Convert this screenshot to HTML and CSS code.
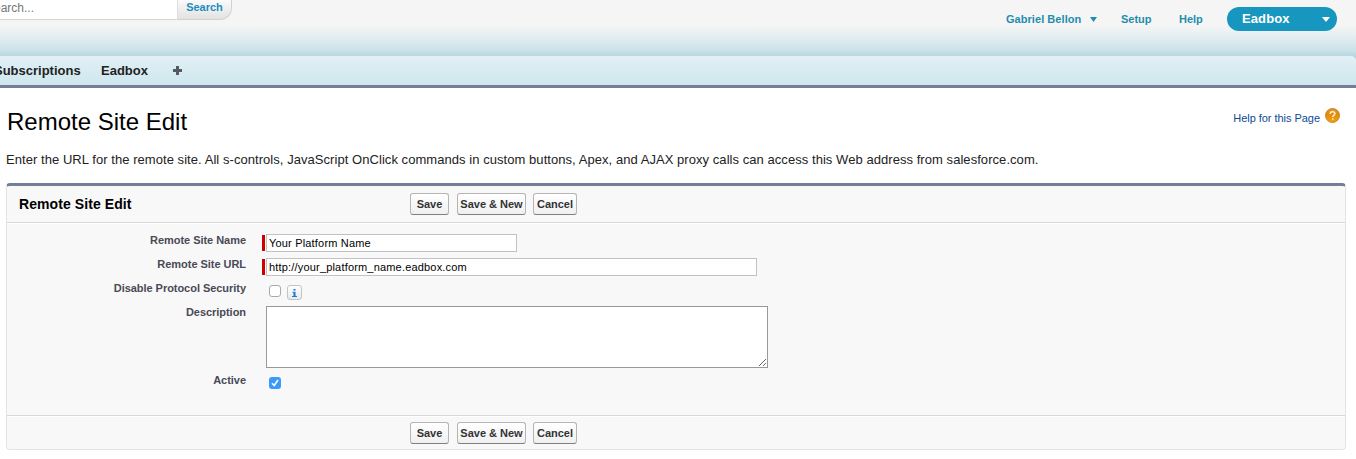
FILE: index.html
```html
<!DOCTYPE html>
<html lang="en">
<head>
<meta charset="utf-8">
<title>Remote Site Edit</title>
<link rel="stylesheet" href="styles.css">
</head>
<body>
<header class="top">
  <div class="search">
    <div class="search-field"><span class="search-hint">Search...</span></div>
    <button class="search-button">Search</button>
  </div>
  <nav class="account">
    <a class="user">Gabriel Bellon<svg class="caret" width="7" height="5" viewBox="0 0 7 5"><path d="M0 0h7L3.5 5z" fill="currentColor"/></svg></a>
    <a class="setup">Setup</a>
    <a class="help">Help</a>
    <div class="app-menu">Eadbox<svg width="8" height="5" viewBox="0 0 8 5"><path d="M0 0h8L4 5z" fill="#fff"/></svg></div>
  </nav>
</header>
<div class="tab-band">
<nav class="tabs">
  <a class="tab-sub">Subscriptions</a>
  <a class="tab-app">Eadbox</a>
  <svg class="plus" width="9" height="9" viewBox="0 0 9 9"><path d="M3 0h3v3h3v3H6v3H3V6H0V3h3z" fill="#555960"/></svg>
</nav>
</div>
<main>
  <div class="title-row">
    <h1>Remote Site Edit</h1>
    <a class="page-help"><span>Help for this Page</span>
      <svg width="15" height="15" viewBox="0 0 15 15"><defs><linearGradient id="orange" x1="0" y1="0" x2="0" y2="1"><stop offset="0" stop-color="#d99a3c"/><stop offset=".4" stop-color="#e28a08"/><stop offset="1" stop-color="#f4a50e"/></linearGradient></defs><circle cx="7.5" cy="7.5" r="7" fill="url(#orange)" stroke="#b8731c" stroke-width=".8"/><path d="M5.2 6c0-3 4.700-2.800 4.700-.2 0 1.500-2.200 1.500-2.200 3.200M7.700 10.200v1.600" fill="none" stroke="#fff3d6" stroke-width="1.500"/></svg></a>
  </div>
  <p class="intro">Enter the URL for the remote site. All s-controls, JavaScript OnClick commands in custom buttons, Apex, and AJAX proxy calls can access this Web address from salesforce.com.</p>
  <form class="panel">
    <div class="panel-head">
      <h2>Remote Site Edit</h2>
      <div class="buttons"><button type="button" class="save">Save</button><button type="button" class="save-new">Save &amp; New</button><button type="button" class="cancel">Cancel</button></div>
    </div>
    <div class="fields">
      <label for="name">Remote Site Name</label>
      <div class="field required"><input id="name" class="name-input" type="text" value="Your Platform Name"></div>
      <label for="url">Remote Site URL</label>
      <div class="field required"><input id="url" class="url-input" type="text" value="http://your_platform_name.eadbox.com"></div>
      <label>Disable Protocol Security</label>
      <div class="field checks"><span class="box"></span><span class="info"><svg width="5" height="8" viewBox="0 0 5 8"><path d="M1.500 0h2v1.500h-2zM.5 2.800h3v4.200H5v1H0V7h1.500V3.800h-1z" fill="#1479d0"/></svg></span></div>
      <label for="description">Description</label>
      <div class="field"><textarea id="description"></textarea></div>
      <label>Active</label>
      <div class="field checks"><span class="box checked"><svg width="12" height="12" viewBox="0 0 12 12"><path d="M3 6.300l2.200 2.200 3.800-5.500" fill="none" stroke="#fff" stroke-width="1.600"/></svg></span></div>
    </div>
    <div class="panel-foot">
      <div class="buttons"><button type="button" class="save">Save</button><button type="button" class="save-new">Save &amp; New</button><button type="button" class="cancel">Cancel</button></div>
    </div>
  </form>
</main>
</body>
</html>
```
FILE: styles.css
```css
* { box-sizing: border-box; }
body { margin: 0; height: 459px; overflow: hidden; background: #fff; color: #000; font: 11px "Liberation Sans", Arial, sans-serif; }
h1, h2, p { margin: 0; }
button { font-family: inherit; padding: 0; }

.top { height: 56px; display: flex; justify-content: space-between; align-items: flex-start; background: linear-gradient(#f5f5f5 0, #f5f5f5 26px, #e1edf0 38px, #cce2e9 50px, #b8d7e0 56px); }
.search { display: flex; height: 20px; }
.search-field { width: 178px; height: 20px; background: #fff; border-right: 1px solid #ddd; border-bottom: 1px solid #d5d5d5; overflow: hidden; }
.search-hint { display: block; margin-left: -14px; font-size: 12px; line-height: 16px; color: #777; }
.search-button { width: 54px; height: 20px; border: solid #d2d2d2; border-width: 0 1px 1px 0; border-radius: 0 0 12px 0; background: linear-gradient(#fafafa, #e2e2e2); color: #1f8dbe; font-size: 11px; font-weight: bold; line-height: 15px; padding-bottom: 4px; }
.account { display: flex; padding: 7px 19px 0 0; color: #1f8dae; font-weight: bold; line-height: 24px; }
.user { width: 115px; letter-spacing: 0.05px; }
.caret { margin: 0 0 1px 9px; }
.setup { width: 58px; }
.help { width: 48px; }
.app-menu { width: 110px; height: 24px; display: flex; align-items: center; justify-content: space-between; padding: 0 7px 1px 15px; border-radius: 12px; background: #1797c0; color: #fff; font-size: 13px; line-height: 24px; letter-spacing: 0.1px; }
.app-menu svg { margin-top: 2px; }
.tab-band { background: #b8d7e0; }
.tabs { height: 32px; display: flex; border-bottom: 3px solid #747e99; border-radius: 0 5px 0 0; background: linear-gradient(#e2f0f5, #cde7ee); color: #222; font-size: 13px; font-weight: bold; line-height: 29px; }
.tab-sub { width: 101px; text-indent: -6px; }
.tab-app { width: 72px; }
.plus { margin-top: 10px; }

main { padding: 0 10px 0 6px; }
.title-row { height: 61px; display: flex; justify-content: space-between; padding: 18px 6px 0 1px; }
h1 { font-size: 24px; line-height: 31px; font-weight: normal; }
.page-help { display: flex; height: 20px; gap: 5px; color: #0f4a95; line-height: 24px; letter-spacing: -0.04px; }
.page-help svg { margin-top: 2px; }
.intro { height: 34px; font-size: 13px; line-height: 22px; letter-spacing: 0.054px; white-space: nowrap; color: #222; }
.panel { height: 267px; border: 1px solid #e4e4e4; border-top: 3px solid #747e99; border-radius: 4px; background: #f8f8f8; }
.panel-head { height: 37px; display: flex; border-bottom: 1px solid #d8d8d8; }
.panel-head h2 { width: 403px; padding-left: 12px; font-size: 14px; line-height: 36px; letter-spacing: 0.08px; }
.buttons { display: flex; padding-top: 7px; }
.buttons button { height: 22px; border: 1px solid #b5b5b5; border-bottom-color: #7f7f7f; border-radius: 3px; background: linear-gradient(#fff, #f0f0f0); color: #333; font-size: 11px; font-weight: bold; line-height: 20px; }
.save { width: 39px; margin-right: 8px; }
.save-new { width: 69px; margin-right: 7px; }
.cancel { width: 44px; }
.fields { height: 193px; padding-top: 10px; display: grid; grid-template-columns: 239px 1fr; grid-template-rows: 24px 24px 24px 68px 24px; column-gap: 16px; border-bottom: 1px solid #d8d8d8; box-shadow: inset 0 1px #fff; }
.fields label { text-align: right; color: #4a4a56; font-weight: bold; line-height: 15px; letter-spacing: -0.04px; }
.field { padding: 1px 0 0 4px; }
.required { display: flex; padding-left: 0; }
.required::before { content: ""; width: 3px; height: 16px; margin: 1px 1px 0 0; background: #c00; }
.field input { height: 18px; padding: 0 2px; border: 1px solid #c2c2c2; font: 11px "Liberation Sans", Arial, sans-serif; letter-spacing: 0.18px; }
.name-input { width: 251px; }
.url-input { width: 491px; }
.checks { display: flex; padding-left: 7px; }
.box { width: 12px; height: 12px; margin-top: 3px; border: 1px solid #aaa; border-radius: 3px; background: #fff; }
.info { width: 15px; height: 15px; margin: 3px 0 0 6px; display: flex; align-items: center; justify-content: center; border: 1px solid #c4c4c4; border-radius: 3px; background: linear-gradient(#fff, #e9e9ed); }
.checked { border: 0; background: #3b99fc; }
.checked svg { display: block; }
textarea { display: block; width: 502px; height: 62px; margin: 0; border: 1px solid #999; background: #fff; }
.panel-foot { height: 33px; padding-left: 403px; box-shadow: inset 0 1px #fff; }
.panel-foot .buttons { padding-top: 6px; }
```
